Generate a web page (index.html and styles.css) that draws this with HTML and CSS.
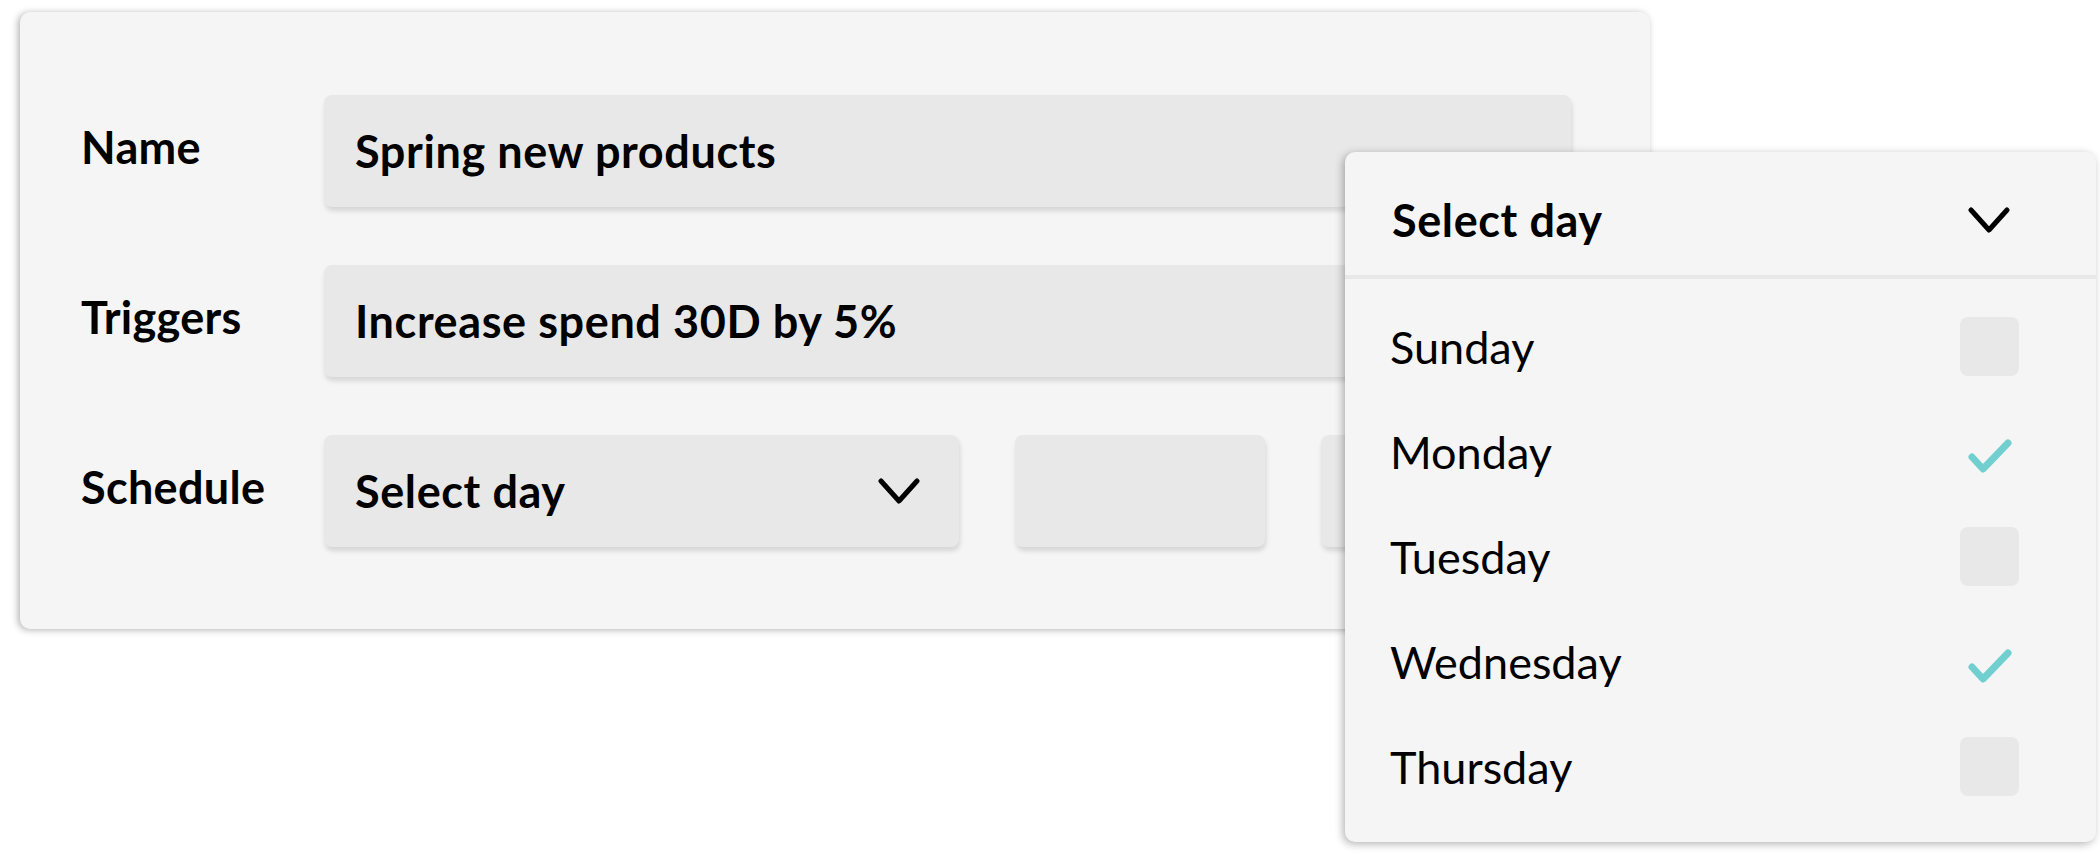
FILE: index.html
```html
<!DOCTYPE html>
<html>
<head>
<meta charset="utf-8">
<title>Campaign schedule</title>
<link rel="stylesheet" href="styles.css">
</head>
<body>
<div class="scene">

  <form class="card">
    <div class="row">
      <label class="label">Name</label>
      <div class="field">Spring new products</div>
    </div>
    <div class="row">
      <label class="label">Triggers</label>
      <div class="field">Increase spend 30D by 5%</div>
    </div>
    <div class="row">
      <label class="label">Schedule</label>
      <div class="schedule">
        <div class="field select">
          <span>Select day</span>
          <svg class="chevron" width="42" height="26" viewBox="0 0 42 26"><path d="M3 3 L21 23 L39 3" fill="none" stroke="#000" stroke-width="5" stroke-linecap="round" stroke-linejoin="round"/></svg>
        </div>
        <div class="field slot"></div>
        <div class="field slot"></div>
      </div>
    </div>
  </form>

  <div class="dropdown">
    <div class="dropdown-head">
      <span>Select day</span>
      <svg class="chevron" width="42" height="26" viewBox="0 0 42 26"><path d="M3 3 L21 23 L39 3" fill="none" stroke="#000" stroke-width="5" stroke-linecap="round" stroke-linejoin="round"/></svg>
    </div>
    <ul class="days">
      <li class="day"><span>Sunday</span><span class="box"></span></li>
      <li class="day"><span>Monday</span><span class="tick"><svg width="44" height="34" viewBox="0 0 44 34"><path d="M4 18 L15 30 L40 4" fill="none" stroke="#72cfd0" stroke-width="7" stroke-linecap="round" stroke-linejoin="round"/></svg></span></li>
      <li class="day"><span>Tuesday</span><span class="box"></span></li>
      <li class="day"><span>Wednesday</span><span class="tick"><svg width="44" height="34" viewBox="0 0 44 34"><path d="M4 18 L15 30 L40 4" fill="none" stroke="#72cfd0" stroke-width="7" stroke-linecap="round" stroke-linejoin="round"/></svg></span></li>
      <li class="day"><span>Thursday</span><span class="box"></span></li>
    </ul>
  </div>

</div>
</body>
</html>
```

FILE: styles.css
```css
body {margin: 0; background: #fff; font-family: Lato, "Open Sans", sans-serif; color: #000;}
.scene {position: relative; width: 2100px; height: 855px; overflow: hidden;}

/* main form card */
.card {box-sizing: border-box; width: 1630px; height: 617px; margin: 12px 0 0 20px; padding: 83px 0 0 61px;
  background: #f5f5f5; border-radius: 10px; box-shadow: -2px 1px 7px rgba(0,0,0,0.3);
  display: grid; grid-template-columns: 243px 1247px; grid-auto-rows: 112px; row-gap: 58px; align-content: start;}
.row {display: contents;}
.label {align-self: center; padding-bottom: 8px; font-size: 45px; font-weight: 700; letter-spacing: 0.3px;}
.field {box-sizing: border-box; height: 112px; padding: 0 31px; background: #e8e8e8; border-radius: 8px;
  box-shadow: 1px 4px 5px rgba(0,0,0,0.13); display: flex; align-items: center; font-size: 45px; font-weight: 700;
  letter-spacing: 0.6px;}
.schedule {display: grid; grid-template-columns: 635px 250px 250px; column-gap: 56px;}
.select {justify-content: space-between; padding-right: 39px;}
.chevron {display: block;}

/* open day picker, lies over the card */
.dropdown {position: absolute; left: 1345px; top: 152px; width: 751px; height: 690px; box-sizing: border-box;
  background: #f5f5f5; border-radius: 10px; box-shadow: -2px 2px 8px rgba(0,0,0,0.3);}
.dropdown-head {height: 127px; box-sizing: border-box; padding: 12px 86px 0 47px; border-bottom: 4px solid #e8e8e8;
  display: flex; align-items: center; justify-content: space-between; font-size: 45px; font-weight: 700;
  letter-spacing: 0.6px;}
.days {list-style: none; margin: 0; padding: 15px 0 0 0;}
.day {height: 105px; box-sizing: border-box; padding: 0 77px 0 45px; display: flex; align-items: center;
  justify-content: space-between; font-size: 45px; font-weight: 400;}
.box, .tick {width: 59px; height: 59px; border-radius: 8px; display: flex; align-items: center; justify-content: center;}
.box {background: #e8e8e8;}
.tick svg {display: block; margin-top: 8px;}
```
